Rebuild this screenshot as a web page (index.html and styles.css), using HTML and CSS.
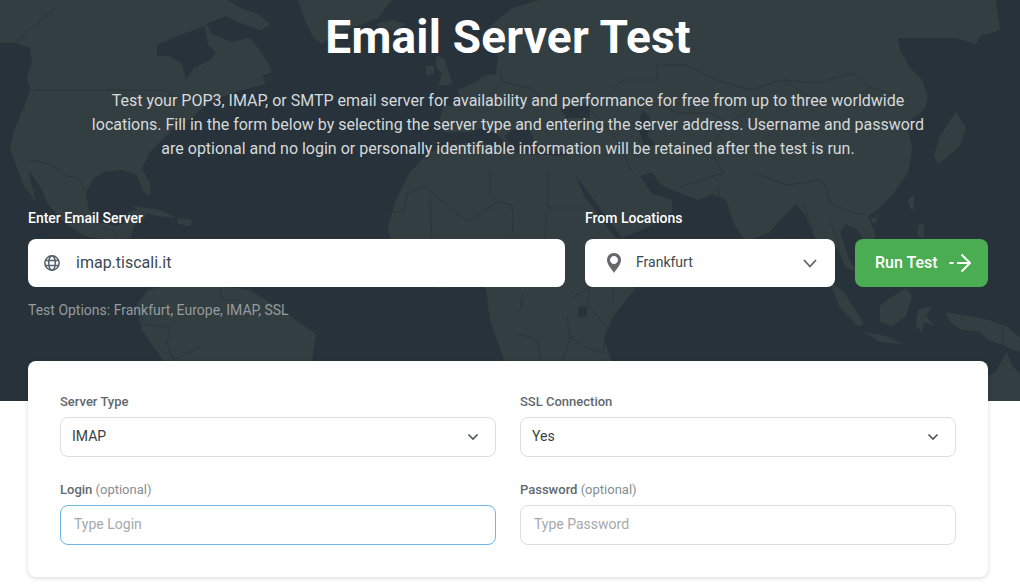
FILE: index.html
```html
<!DOCTYPE html>
<html lang="en">
<head>
<meta charset="utf-8">
<title>Email Server Test</title>
<link rel="stylesheet" href="styles.css">
</head>
<body>
<section class="hero">
  <svg class="map" viewBox="0 0 1020 401" width="1020" height="401" aria-hidden="true">
    <defs>
      <pattern id="dots" width="2" height="2" patternUnits="userSpaceOnUse">
        <rect width="2" height="2" fill="#303b3f"/>
        <rect width="1" height="1" fill="#364144"/>
        <rect x="1" y="1" width="1" height="1" fill="#364144"/>
      </pattern>
    </defs>
    <g class="land">
      <path d="M0,0 L228,0 L240,8 L258,14 L270,24 L262,30 L248,26 L238,22 L226,16 L206,24 L212,34 L232,42 L250,38 L258,48 L268,62 L272,72 L262,76 L266,84 L250,88 L236,92 L218,98 L206,104 L192,118 L176,126 L160,142 L150,152 L142,168 L150,184 L150,196 L144,192 L136,174 L122,170 L104,172 L94,178 L86,192 L88,208 L98,222 L116,226 L126,222 L128,212 L144,208 L146,216 L134,226 L130,238 L110,240 L84,236 L64,222 L48,204 L40,186 L28,170 L36,202 L24,186 L14,160 L10,148 L14,130 L24,108 L30,90 L27,76 L32,62 L30,48 L15,43 L0,43 Z"/>
      <path d="M298,0 L392,0 L378,18 L358,26 L340,32 L322,44 L314,38 L306,22 L302,12 Z"/>
      <path d="M376,24 L392,20 L406,24 L396,30 L382,30 Z"/>
      <path d="M436,56 L444,58 L450,76 L452,84 L438,86 L442,74 L436,66 Z"/>
      <path d="M426,66 L434,66 L434,74 L426,76 Z"/>
      <path d="M488,28 L512,8 L540,0 L996,0 L1000,30 L980,36 L976,44 L956,38 L898,38 L900,50 L910,68 L922,80 L928,96 L926,106 L918,116 L912,118 L908,128 L912,150 L908,172 L896,190 L880,208 L868,216 L876,236 L866,244 L858,230 L846,224 L840,232 L848,256 L856,272 L846,268 L838,250 L830,238 L818,246 L806,216 L796,204 L786,214 L770,232 L756,238 L744,240 L734,224 L726,200 L712,194 L698,200 L672,190 L660,184 L652,172 L640,176 L652,194 L672,200 L672,212 L646,228 L622,238 L600,208 L576,176 L566,152 L546,150 L536,146 L530,130 L516,128 L504,136 L512,148 L494,132 L480,128 L470,132 L444,132 L440,118 L444,106 L462,106 L458,90 L476,82 L484,76 L496,74 L498,54 L490,46 Z"/>
      <path d="M396,200 L410,172 L430,152 L456,144 L480,142 L520,154 L568,156 L584,196 L616,238 L640,240 L650,246 L634,290 L612,318 L604,340 L612,362 L590,400 L530,400 L512,370 L504,360 L490,320 L486,288 L474,284 L440,288 L410,284 L392,250 L388,226 Z"/>
      <path d="M148,290 L186,282 L250,290 L272,304 L316,334 L312,362 L290,400 L210,400 L170,370 L142,330 L136,306 Z"/>
      <path d="M132,206 L160,210 L176,218 L158,216 L140,212 Z"/>
      <path d="M178,218 L192,220 L190,226 L178,224 Z"/>
      <path d="M830,282 L844,292 L864,324 L858,326 L840,308 Z"/>
      <path d="M864,332 L886,336 L902,344 L880,342 Z"/>
      <path d="M880,306 L890,298 L906,288 L912,296 L906,316 L892,326 L880,322 Z"/>
      <path d="M918,310 L932,306 L926,316 L934,326 L924,322 L922,332 L916,326 Z"/>
      <path d="M945,312 L968,316 L988,320 L1006,326 L1020,338 L1020,352 L1000,344 L988,340 L980,332 L962,330 L950,322 Z"/>
      <path d="M908,200 L914,194 L914,210 L910,208 Z"/>
      <path d="M918,226 L924,224 L924,238 L918,236 Z"/>
      <path d="M870,218 L878,218 L874,224 Z"/>
      <path d="M940,136 L956,112 L966,128 L960,146 L948,156 L938,164 L934,156 Z"/>
      <path d="M988,376 L996,372 L1002,360 L1007,352 L1012,366 L1020,374 L1020,401 L988,401 Z"/>
    </g>
    <g class="water">
      <path d="M157,45 L180,35 L205,26 L208,45 L216,52 L210,60 L194,68 L186,80 L182,64 L170,56 L157,56 Z"/>
      <path d="M238,0 L262,0 L250,8 Z"/>
      <path d="M642,110 L650,116 L648,136 L656,146 L644,146 L638,126 Z"/>
      <path d="M560,108 L590,104 L590,118 L566,118 Z"/>
      <path d="M578,307 L587,306 L587,316 L578,317 Z"/>
    </g>
    <g class="borders">
      <polyline points="55,8 15,43"/>
      <polyline points="33,90 165,90 172,96 186,100"/>
      <polyline points="30,160 52,165 66,176 78,178 86,192"/>
      <polyline points="103,227 113,230 116,238"/>
      <polyline points="220,287 222,300 240,300"/>
      <polyline points="170,330 167,343 173,360 200,347"/>
      <polyline points="137,323 167,327 177,320"/>
      <polyline points="422,185 468,222 498,202 512,205"/>
      <polyline points="430,197 432,238"/>
      <polyline points="490,170 490,193 498,202"/>
      <polyline points="512,205 513,223 512,236"/>
      <polyline points="548,170 548,208 590,208"/>
      <polyline points="547,213 545,237"/>
      <polyline points="390,212 403,212 408,193 422,187"/>
      <polyline points="567,317 570,337 563,360"/>
      <polyline points="570,337 585,347 603,353"/>
      <polyline points="573,297 590,287 588,305 607,327 603,353"/>
      <polyline points="523,293 520,310 503,327"/>
      <polyline points="517,333 538,340 540,360"/>
      <polyline points="613,287 613,303"/>
      <polyline points="613,90 623,80 657,80 657,65 687,65 717,80 750,90 783,80 817,83 853,73 870,87 910,100"/>
      <polyline points="783,80 820,103 857,97 870,87"/>
      <polyline points="593,113 613,133 633,173"/>
      <polyline points="657,103 677,113 710,113 727,123 750,110"/>
      <polyline points="727,123 710,150 723,173 680,187"/>
      <polyline points="717,187 723,207"/>
      <polyline points="755,173 787,185 802,183 820,180 825,185 830,203 850,212 865,215"/>
      <polyline points="803,203 813,233"/>
      <polyline points="830,220 840,250"/>
      <polyline points="500,70 503,82 488,96"/>
      <polyline points="503,82 530,88 545,100"/>
      <polyline points="1003,318 1003,345"/>
    </g>
  </svg>
  <div class="hero-inner">
    <h1 class="title">Email Server Test</h1>
    <p class="intro">Test your POP3, IMAP, or SMTP email server for availability and performance for free from up to three worldwide locations. Fill in the form below by selecting the server type and entering the server address. Username and password are optional and no login or personally identifiable information will be retained after the test is run.</p>
    <div class="search">
      <div class="field-server">
        <div class="hero-label">Enter Email Server</div>
        <div class="box">
          <svg class="ico-globe" viewBox="0 0 16 16" width="16" height="16" aria-hidden="true">
            <circle cx="8" cy="8" r="7.2"/>
            <ellipse cx="8" cy="8" rx="3.3" ry="7.2"/>
            <path d="M1.2,5.4 H14.8 M1.2,10.6 H14.8"/>
          </svg>
          <span class="server-value">imap.tiscali.it</span>
        </div>
      </div>
      <div class="field-loc">
        <div class="hero-label">From Locations</div>
        <div class="box box-loc">
          <svg class="ico-pin" viewBox="0 0 14 20" width="14" height="20" aria-hidden="true">
            <path fill-rule="evenodd" d="M7,0 C3,0 0,3 0,7 C0,11.5 5,16.5 7,20 C9,16.5 14,11.5 14,7 C14,3 11,0 7,0 Z M7,3 C9.2,3 11,4.8 11,7 C11,9.2 9.2,11 7,11 C4.8,11 3,9.2 3,7 C3,4.8 4.800,3 7,3 Z"/>
          </svg>
          <span class="loc-value">Frankfurt</span>
          <svg class="ico-chev-lg" viewBox="0 0 14 9" width="14" height="9" aria-hidden="true"><path d="M1,1 L7,7.500 L13,1"/></svg>
        </div>
      </div>
      <div class="run-wrap">
        <div class="run">
          <span class="run-text">Run Test</span>
          <svg class="ico-arrow" viewBox="0 0 22 20" width="22" height="20" aria-hidden="true"><path d="M0.500,10 H4.500 M8,10 H21 M12.500,1.500 L21,10 L12.500,18.500"/></svg>
        </div>
      </div>
    </div>
    <div class="options">Test Options: Frankfurt, Europe, IMAP, SSL</div>
  </div>
</section>
<section class="card">
  <div class="grid">
    <div class="field">
      <div class="label">Server Type</div>
      <div class="select"><span>IMAP</span>
        <svg class="ico-chev" viewBox="0 0 12 8" width="12" height="8" aria-hidden="true"><path d="M1.500,1.500 L6,6 L10.500,1.500"/></svg>
      </div>
    </div>
    <div class="field">
      <div class="label">SSL Connection</div>
      <div class="select"><span>Yes</span>
        <svg class="ico-chev" viewBox="0 0 12 8" width="12" height="8" aria-hidden="true"><path d="M1.500,1.500 L6,6 L10.500,1.500"/></svg>
      </div>
    </div>
    <div class="field">
      <div class="label">Login <span class="opt">(optional)</span></div>
      <input class="input input-focus" type="text" placeholder="Type Login">
    </div>
    <div class="field">
      <div class="label">Password <span class="opt">(optional)</span></div>
      <input class="input" type="text" placeholder="Type Password">
    </div>
  </div>
</section>
</body>
</html>
```
FILE: styles.css
```css
* { box-sizing: border-box; }
html { overflow: hidden; background: #fff; }
body { margin: 0; padding: 0; min-height: 586px; background: #fff; font-family: Roboto, "Liberation Sans", sans-serif; color: #333; }

.hero { position: relative; height: 401px; background: #27323a; overflow: hidden; }
.map { position: absolute; left: 0; top: 0; display: block; }
.land path { fill: url(#dots); }
.water path { fill: #27323a; }
.borders polyline { fill: none; stroke: #2a353b; stroke-width: 1; }

.hero-inner { position: relative; padding: 9px 32px 0 28px; }
.title { margin: 0; font-size: 46px; line-height: 56px; font-weight: 700; letter-spacing: .2px; color: #fff; text-align: center; }
.intro { width: 840px; margin: 24px auto 0; font-size: 16px; line-height: 24px; color: #d6d9db; text-align: center; }

.search { display: flex; gap: 20px; margin-top: 47px; }
.field-server { width: 537px; }
.field-loc { width: 250px; }
.run-wrap { padding-top: 31px; }
.hero-label { font-size: 14px; line-height: 20px; font-weight: 500; color: #fff; margin-bottom: 11px; height: 20px; }
.box { display: flex; align-items: center; height: 48px; background: #fff; border-radius: 8px; padding-left: 16px; }
.box-loc { padding: 0 18px 0 22px; }
.server-value { margin-left: 16px; padding-bottom: 2px; font-size: 16px; color: #3c4852; }
.loc-value { flex: 1; margin-left: 15px; padding-bottom: 2px; font-size: 14px; color: #3c4852; }
.ico-globe { fill: none; stroke: #56616b; stroke-width: 1.5; }
.ico-pin { fill: #68686a; }
.ico-chev-lg { fill: none; stroke: #5a656e; stroke-width: 1.800; }
.run { display: flex; align-items: center; gap: 11px; width: 133px; height: 48px; padding-left: 20px; background: #4aad52; border-radius: 8px; color: #fff; font-size: 16px; font-weight: 500; }
.run-text { padding-bottom: 2px; }
.ico-arrow { fill: none; stroke: #fff; stroke-width: 2; }
.options { margin-top: 13px; font-size: 14px; line-height: 20px; color: #959b9f; }

.card { position: relative; width: 960px; margin: -40px 0 0 28px; padding: 32px; background: #fff; border-radius: 8px; box-shadow: 0 1px 4px rgba(0,0,0,.16); }
.grid { display: grid; grid-template-columns: 436px 436px; column-gap: 24px; row-gap: 24px; }
.label { font-size: 13px; line-height: 16px; font-weight: 500; color: #5f696f; padding-top: 1px; height: 24px; }
.opt { font-weight: 400; color: #868e93; }
.select { display: flex; align-items: center; justify-content: space-between; height: 40px; padding: 0 16px 2px 11px; border: 1px solid #dedede; border-radius: 8px; font-size: 14px; color: #3a3f44; }
.ico-chev { fill: none; stroke: #4d5458; stroke-width: 1.600; margin-top: 2px; }
.input { display: block; width: 100%; height: 40px; padding: 0 13px 2px; border: 1px solid #dedede; border-radius: 8px; font: 14px Roboto, "Liberation Sans", sans-serif; color: #333; background: #fff; outline: none; }
.input::placeholder { color: #a6a9ab; opacity: 1; }
.input-focus { border-color: #6db6e6; }
```
